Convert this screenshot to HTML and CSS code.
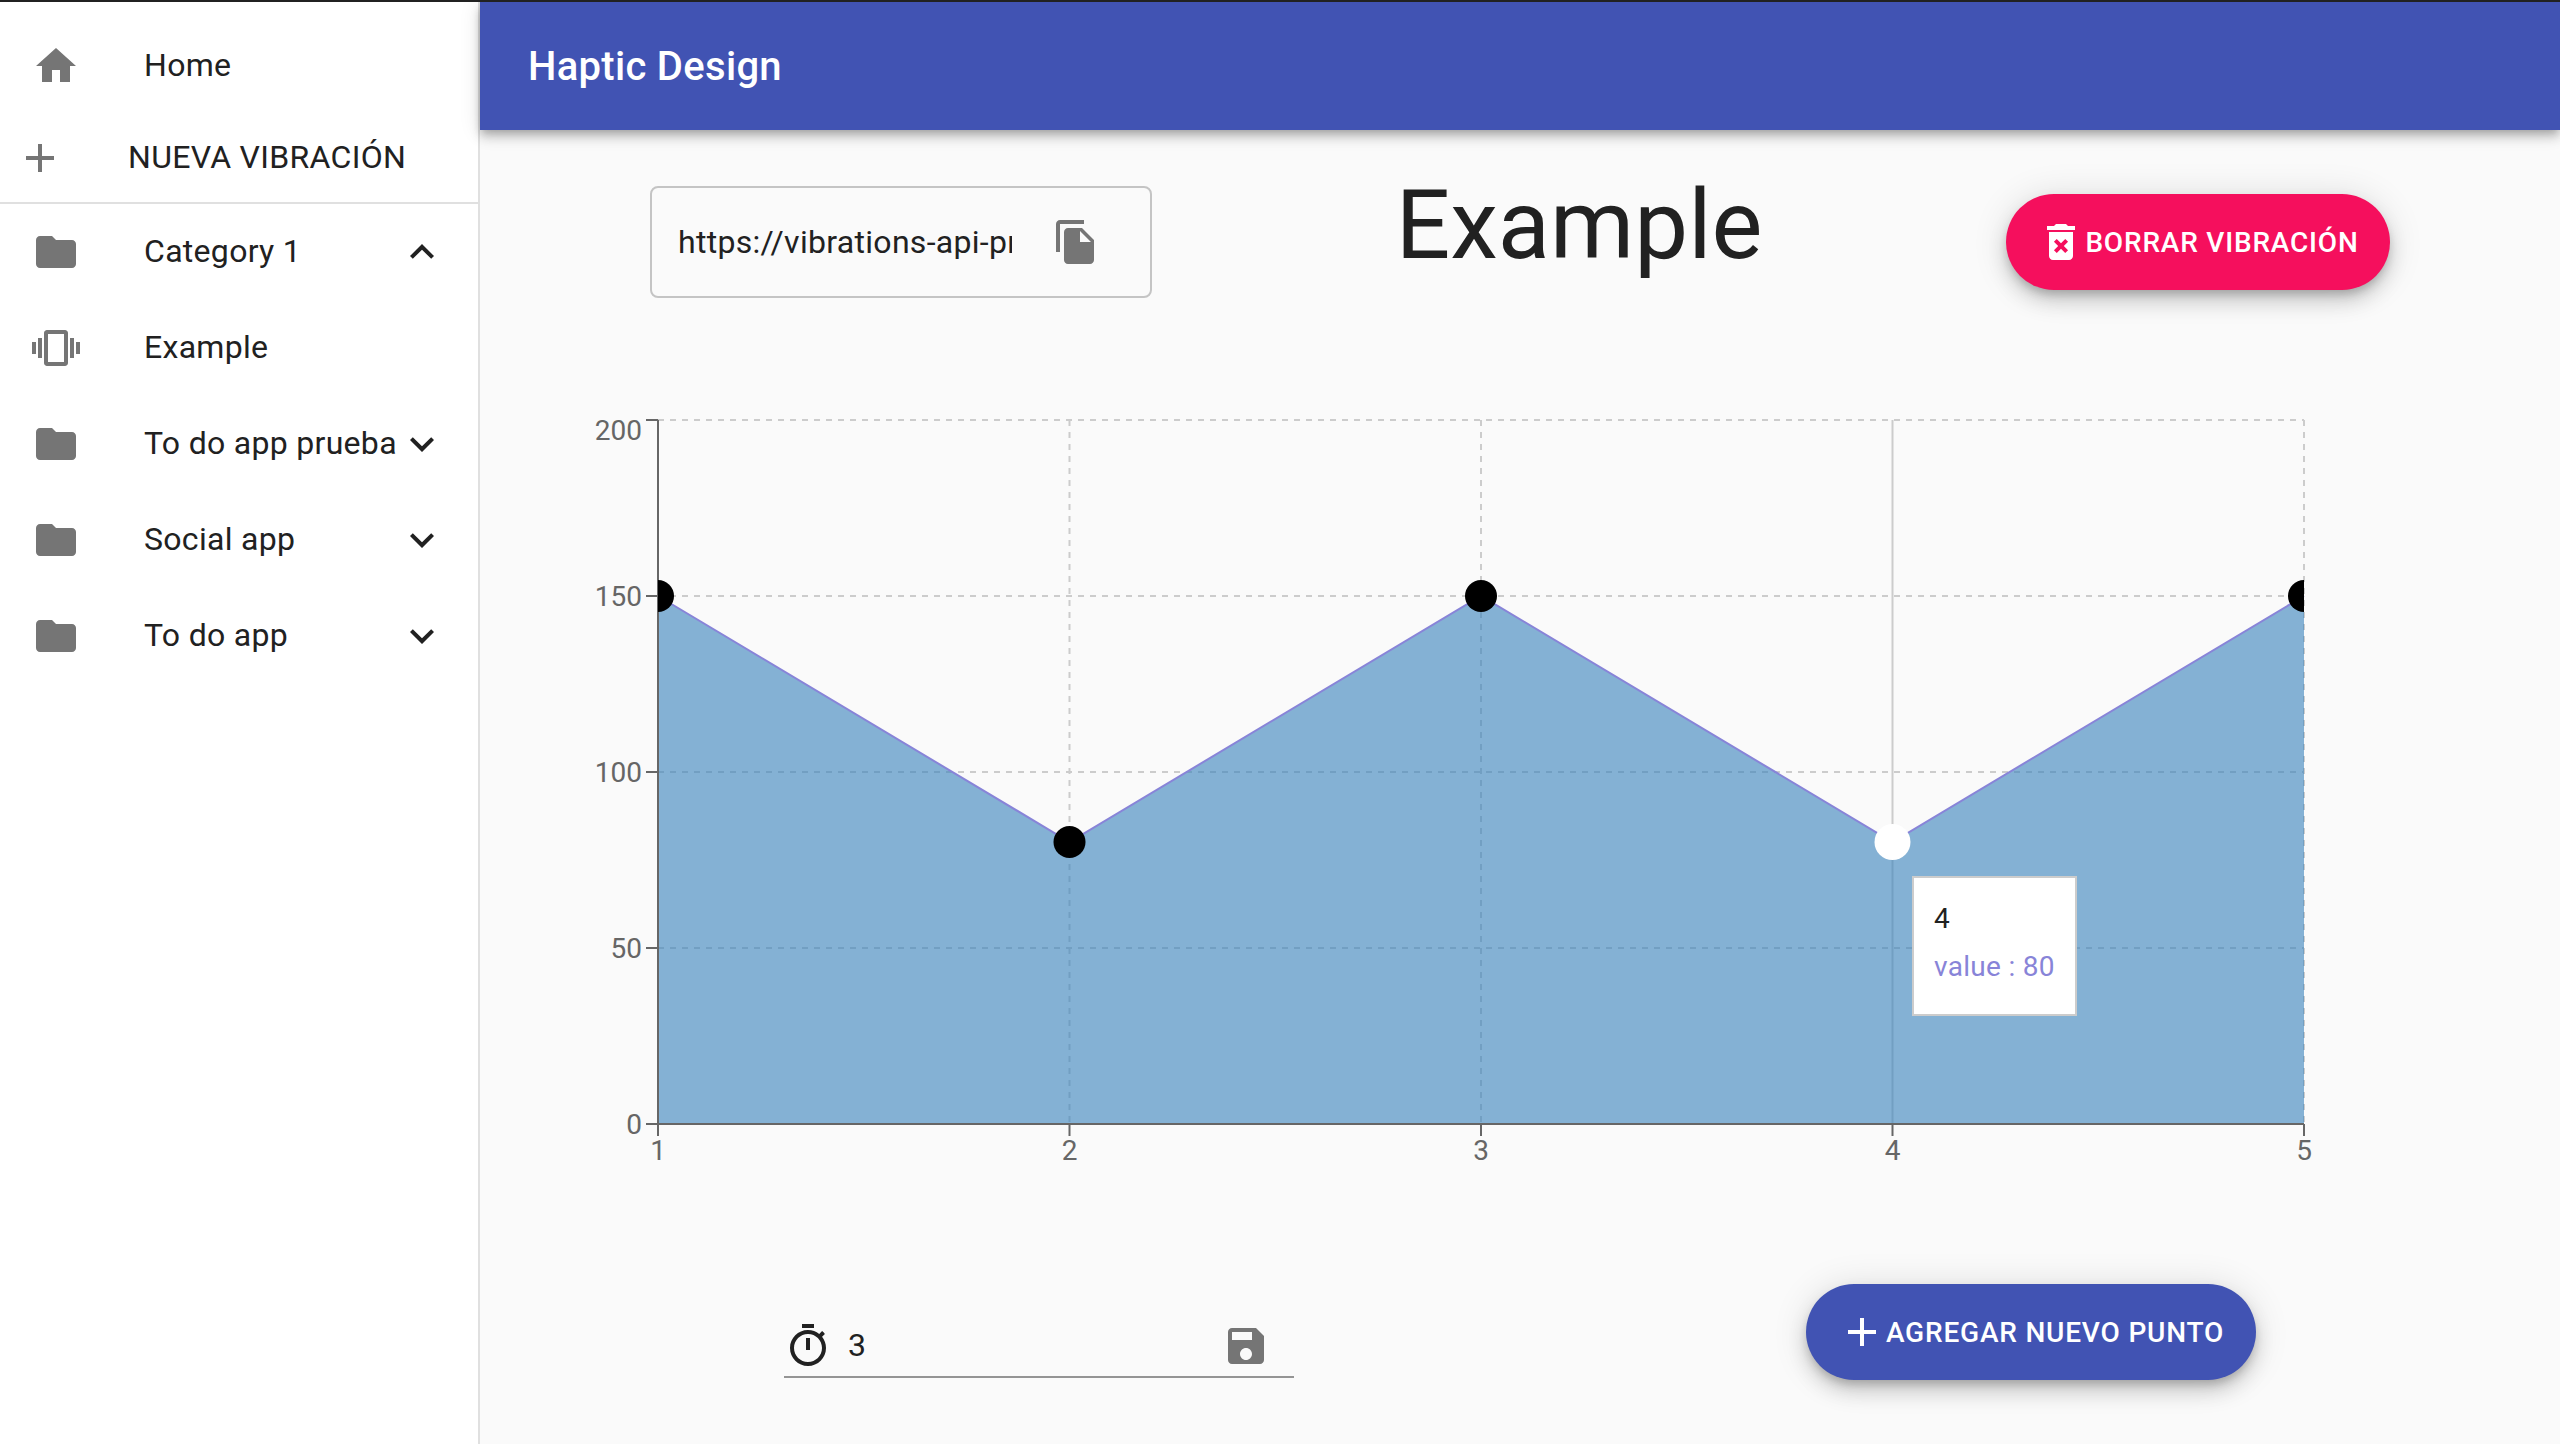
FILE: index.html
```html
<!DOCTYPE html>
<html lang="en">
<head>
    <meta charset="UTF-8">
    <meta name="viewport" content="width=device-width, initial-scale=1.0">
    <title>Haptic Design</title>
    <link rel="stylesheet" href="styles.css">
</head>
<body>
    <div class="app">
        <div class="sidebar">
            <div class="top-list">
                <div class="item">
                    <svg class="icon" viewBox="0 0 24 24"><path d="M10 20v-6h4v6h5v-8h3L12 3 2 12h3v8z"/></svg>
                    <span class="item-text">Home</span>
                </div>
                <div class="item-new">
                    <svg class="icon" viewBox="0 0 24 24"><path d="M19 13h-6v6h-2v-6H5v-2h6V5h2v6h6v2z"/></svg>
                    <span class="item-new-text">NUEVA VIBRACIÓN</span>
                </div>
            </div>
            <div class="item">
                <svg class="icon" viewBox="0 0 24 24"><path d="M10 4H4c-1.1 0-1.99.9-1.99 2L2 18c0 1.1.9 2 2 2h16c1.1 0 2-.9 2-2V8c0-1.1-.9-2-2-2h-8l-2-2z"/></svg>
                <span class="item-text">Category 1</span>
                <svg class="icon chevron" viewBox="0 0 24 24"><path d="M12 8l-6 6 1.41 1.41L12 10.83l4.59 4.58L18 14z"/></svg>
            </div>
            <div class="item">
                <svg class="icon" viewBox="0 0 24 24"><path d="M0 15h2V9H0v6zm3 2h2V7H3v10zm19-8v6h2V9h-2zm-3 8h2V7h-2v10zM16.5 3h-9C6.67 3 6 3.67 6 4.5v15c0 .83.67 1.5 1.5 1.5h9c.83 0 1.5-.67 1.5-1.5v-15c0-.83-.67-1.5-1.5-1.5zM16 19H8V5h8v14z"/></svg>
                <span class="item-text">Example</span>
            </div>
            <div class="item">
                <svg class="icon" viewBox="0 0 24 24"><path d="M10 4H4c-1.1 0-1.99.9-1.99 2L2 18c0 1.1.9 2 2 2h16c1.1 0 2-.9 2-2V8c0-1.1-.9-2-2-2h-8l-2-2z"/></svg>
                <span class="item-text">To do app prueba</span>
                <svg class="icon chevron" viewBox="0 0 24 24"><path d="M16.59 8.59L12 13.17 7.41 8.59 6 10l6 6 6-6z"/></svg>
            </div>
            <div class="item">
                <svg class="icon" viewBox="0 0 24 24"><path d="M10 4H4c-1.1 0-1.99.9-1.99 2L2 18c0 1.1.9 2 2 2h16c1.1 0 2-.9 2-2V8c0-1.1-.9-2-2-2h-8l-2-2z"/></svg>
                <span class="item-text">Social app</span>
                <svg class="icon chevron" viewBox="0 0 24 24"><path d="M16.59 8.59L12 13.17 7.41 8.59 6 10l6 6 6-6z"/></svg>
            </div>
            <div class="item">
                <svg class="icon" viewBox="0 0 24 24"><path d="M10 4H4c-1.1 0-1.99.9-1.99 2L2 18c0 1.1.9 2 2 2h16c1.1 0 2-.9 2-2V8c0-1.1-.9-2-2-2h-8l-2-2z"/></svg>
                <span class="item-text">To do app</span>
                <svg class="icon chevron" viewBox="0 0 24 24"><path d="M16.59 8.59L12 13.17 7.41 8.59 6 10l6 6 6-6z"/></svg>
            </div>
        </div>

        <div class="content">
            <div class="appbar">Haptic Design</div>

            <div class="toolbar">
                <div class="url-box">
                    <div class="url-text">https://vibrations-api-pr</div>
                    <svg class="copy-icon" viewBox="0 0 24 24"><path d="M16 1H4c-1.1 0-2 .9-2 2v14h2V3h12V1zm-1 4l6 6v10c0 1.1-.9 2-2 2H7.99C6.89 23 6 22.1 6 21l.01-14c0-1.1.89-2 1.99-2h7zm-1 7h5.5L14 6.5V12z"/></svg>
                </div>
                <h1 class="title">Example</h1>
                <button class="btn btn-delete">
                    <svg class="btn-icon" viewBox="0 0 24 24"><path d="M6 19c0 1.1.9 2 2 2h8c1.1 0 2-.9 2-2V7H6v12zm2.46-7.12l1.41-1.41L12 12.59l2.12-2.12 1.41 1.41L13.41 14l2.12 2.12-1.41 1.41L12 15.41l-2.12 2.12-1.41-1.41L10.59 14l-2.13-2.12zM15.5 4l-1-1h-5l-1 1H5v2h14V4z"/></svg>
                    BORRAR VIBRACIÓN
                </button>
            </div>

            <div class="chart">
                <svg class="chart-svg" width="1760" height="780" viewBox="580 400 1760 780">
                    <defs>
                        <clipPath id="plot"><rect x="658" y="400" width="1646" height="740"/></clipPath>
                    </defs>
                    <g class="grid">
                        <line x1="658" y1="420" x2="2304" y2="420"/>
                        <line x1="658" y1="596" x2="2304" y2="596"/>
                        <line x1="658" y1="772" x2="2304" y2="772"/>
                        <line x1="658" y1="948" x2="2304" y2="948"/>
                        <line x1="1069.5" y1="420" x2="1069.5" y2="1123"/>
                        <line x1="1481" y1="420" x2="1481" y2="1123"/>
                        <line x1="2304" y1="420" x2="2304" y2="1123"/>
                    </g>
                    <line class="cursor" x1="1892.5" y1="420" x2="1892.5" y2="1123"/>
                    <path class="area" d="M658 596L1069.5 842L1481 596L1892.5 842L2304 596V1123H658Z"/>
                    <path class="area-line" d="M658 596L1069.5 842L1481 596L1892.5 842L2304 596"/>
                    <g class="axis">
                        <line x1="658" y1="420" x2="658" y2="1124"/>
                        <line x1="657" y1="1124" x2="2304" y2="1124"/>
                        <line x1="646" y1="420" x2="658" y2="420"/>
                        <line x1="646" y1="596" x2="658" y2="596"/>
                        <line x1="646" y1="772" x2="658" y2="772"/>
                        <line x1="646" y1="948" x2="658" y2="948"/>
                        <line x1="646" y1="1124" x2="658" y2="1124"/>
                        <line x1="658" y1="1124" x2="658" y2="1136"/>
                        <line x1="1069.5" y1="1124" x2="1069.5" y2="1136"/>
                        <line x1="1481" y1="1124" x2="1481" y2="1136"/>
                        <line x1="1892.5" y1="1124" x2="1892.5" y2="1136"/>
                        <line x1="2304" y1="1124" x2="2304" y2="1136"/>
                    </g>
                    <g class="y-labels">
                        <text x="642" y="440">200</text>
                        <text x="642" y="606">150</text>
                        <text x="642" y="782">100</text>
                        <text x="642" y="958">50</text>
                        <text x="642" y="1134">0</text>
                    </g>
                    <g class="x-labels">
                        <text x="658" y="1160">1</text>
                        <text x="1069.5" y="1160">2</text>
                        <text x="1481" y="1160">3</text>
                        <text x="1892.5" y="1160">4</text>
                        <text x="2304" y="1160">5</text>
                    </g>
                    <g clip-path="url(#plot)">
                        <circle cx="658" cy="596" r="16"/>
                        <circle cx="1069.5" cy="842" r="16"/>
                        <circle cx="1481" cy="596" r="16"/>
                        <circle cx="2304" cy="596" r="16"/>
                        <circle class="dot-active" cx="1892.5" cy="842" r="18"/>
                    </g>
                </svg>
                <div class="tooltip">
                    <div class="tooltip-label">4</div>
                    <div class="tooltip-value">value : 80</div>
                </div>
            </div>

            <div class="bottom-row">
                <div class="duration">
                    <svg class="timer-icon" viewBox="0 0 24 24"><path d="M15 1H9v2h6V1zm-4 13h2V8h-2v6zm8.03-6.61l1.42-1.42c-.43-.51-.9-.99-1.41-1.41l-1.42 1.42C16.07 4.74 14.12 4 12 4c-4.97 0-9 4.03-9 9s4.02 9 9 9 9-4.03 9-9c0-2.12-.74-4.07-1.97-5.61zM12 20c-3.87 0-7-3.13-7-7s3.13-7 7-7 7 3.13 7 7-3.13 7-7 7z"/></svg>
                    <span class="duration-value">3</span>
                    <svg class="save-icon" viewBox="0 0 24 24"><path d="M17 3H5c-1.11 0-2 .9-2 2v14c0 1.1.89 2 2 2h14c1.1 0 2-.9 2-2V7l-4-4zm-5 16c-1.66 0-3-1.34-3-3s1.34-3 3-3 3 1.34 3 3-1.34 3-3 3zm3-10H5V5h10v4z"/></svg>
                </div>
                <button class="btn btn-add">
                    <svg class="btn-icon" viewBox="0 0 24 24"><path d="M19 13h-6v6h-2v-6H5v-2h6V5h2v6h6v2z"/></svg>
                    AGREGAR NUEVO PUNTO
                </button>
            </div>
        </div>
    </div>
</body>
</html>
```

FILE: styles.css
```css
body {
    margin: 0;
    padding: 0;
    font-family: Roboto, "Liberation Sans", sans-serif;
    color: #212121;
    background-color: #fafafa;
    border-top: 2px solid #212121;
}

.app {
    display: flex;
    height: 1442px;
    overflow: hidden;
}

/* sidebar */
.sidebar {
    width: 480px;
    flex-shrink: 0;
    box-sizing: border-box;
    background-color: #fff;
    border-right: 2px solid #e0e0e0;
}
.top-list {
    padding-top: 16px;
    border-bottom: 2px solid #e0e0e0;
}
.item {
    display: flex;
    align-items: center;
    height: 96px;
    padding: 0 32px;
}
.item-new {
    display: flex;
    align-items: center;
    height: 88px;
    padding: 0 16px;
}
.icon {
    width: 48px;
    height: 48px;
    flex-shrink: 0;
    fill: #757575;
}
.item-text {
    flex: 1;
    margin-left: 64px;
    padding-bottom: 2px;
    font-size: 32px;
    letter-spacing: 0.3px;
    white-space: nowrap;
}
.item-new-text {
    margin-left: 64px;
    padding-bottom: 2px;
    font-size: 32px;
    letter-spacing: 0.3px;
    white-space: nowrap;
}
.chevron {
    fill: #212121;
}

/* main area */
.content {
    flex: 1;
    min-width: 0;
}
.appbar {
    height: 128px;
    box-sizing: border-box;
    padding-left: 48px;
    display: flex;
    align-items: center;
    font-size: 40px;
    font-weight: 500;
    letter-spacing: 0.3px;
    color: #fff;
    background-color: #4153b3;
    box-shadow: 0 4px 8px -2px rgba(0, 0, 0, 0.2), 0 8px 10px 0 rgba(0, 0, 0, 0.14), 0 2px 20px 0 rgba(0, 0, 0, 0.12);
}
.toolbar {
    height: 270px;
    box-sizing: border-box;
    display: flex;
    align-items: flex-start;
    padding: 56px 170px 0 170px;
}
.url-box {
    width: 502px;
    height: 112px;
    flex-shrink: 0;
    box-sizing: border-box;
    display: flex;
    align-items: center;
    padding-left: 26px;
    background-color: #fafafa;
    border: 2px solid #c4c4c4;
    border-radius: 8px;
}
.url-text {
    width: 334px;
    overflow: hidden;
    white-space: nowrap;
    font-size: 32px;
    letter-spacing: 0.3px;
}
.copy-icon {
    width: 48px;
    height: 48px;
    margin-left: 40px;
    flex-shrink: 0;
    fill: #757575;
}
.title {
    flex: 1;
    margin: -17px 0 0;
    text-align: center;
    font-size: 96px;
    font-weight: 400;
    color: #212121;
}
.btn {
    height: 96px;
    display: flex;
    align-items: center;
    justify-content: center;
    flex-shrink: 0;
    padding: 0;
    border: none;
    border-radius: 48px;
    color: #fff;
    font-family: inherit;
    font-size: 28px;
    font-weight: 500;
    letter-spacing: 0.8px;
    box-shadow: 0 6px 10px -2px rgba(0, 0, 0, 0.2), 0 12px 20px 0 rgba(0, 0, 0, 0.14), 0 2px 36px 0 rgba(0, 0, 0, 0.12);
}
.btn-icon {
    width: 48px;
    height: 48px;
    fill: #fff;
}
.btn-delete {
    width: 384px;
    margin-top: 8px;
    background-color: #f50f5d;
}
.btn-add {
    width: 450px;
    margin-left: 512px;
    background-color: #4153b3;
}

/* chart */
.chart {
    position: relative;
    height: 780px;
    margin-left: 100px;
}
.chart-svg {
    display: block;
}
.grid line {
    stroke: #ccc;
    stroke-width: 2;
    stroke-dasharray: 6 6;
}
.cursor {
    stroke: #ccc;
    stroke-width: 2;
}
.area {
    fill: #3580bb;
    fill-opacity: 0.6;
}
.area-line {
    fill: none;
    stroke: #8884d8;
    stroke-width: 2;
}
.axis line {
    stroke: #666;
    stroke-width: 2;
}
.y-labels text,
.x-labels text {
    font-size: 28px;
    fill: #666;
}
.y-labels text {
    text-anchor: end;
}
.x-labels text {
    text-anchor: middle;
}
.dot-active {
    fill: #fff;
}
.tooltip {
    position: absolute;
    left: 1332px;
    top: 476px;
    width: 165px;
    height: 140px;
    box-sizing: border-box;
    padding: 20px;
    background-color: #fff;
    border: 2px solid #ccc;
    font-size: 28px;
    letter-spacing: 0.3px;
    white-space: nowrap;
}
.tooltip-label {
    height: 46px;
    line-height: 42px;
    color: #212121;
}
.tooltip-value {
    line-height: 46px;
    color: #8884d8;
}

/* bottom row */
.bottom-row {
    display: flex;
    align-items: flex-start;
    padding: 104px 0 0 304px;
}
.duration {
    width: 510px;
    height: 94px;
    box-sizing: border-box;
    display: flex;
    align-items: center;
    padding-top: 31px;
    border-bottom: 2px solid #949494;
}
.timer-icon {
    width: 48px;
    height: 48px;
    flex-shrink: 0;
    fill: #212121;
}
.duration-value {
    flex: 1;
    margin-left: 16px;
    padding-bottom: 2px;
    font-size: 32px;
}
.save-icon {
    width: 48px;
    height: 48px;
    flex-shrink: 0;
    margin-right: 24px;
    fill: #757575;
}
```
